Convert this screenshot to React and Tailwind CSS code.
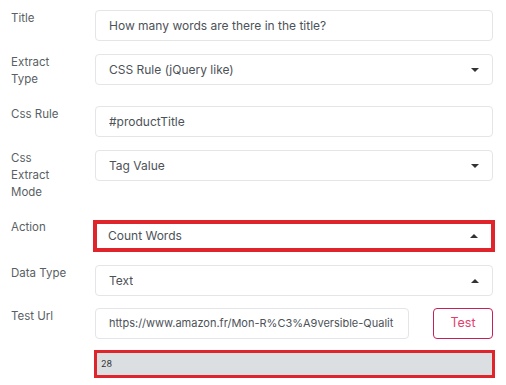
import React from "react";

const font = { fontFamily: "Inter, 'Noto Sans', sans-serif" };

function Caret({ up }) {
  return (
    <svg width="8" height="4" viewBox="0 0 8 4" className="shrink-0">
      {up ? <path d="M0 4 L4 0 L8 4 Z" fill="#333" /> : <path d="M0 0 L8 0 L4 4 Z" fill="#333" />}
    </svg>
  );
}

function Field({ children, select, up }) {
  return (
    <div className="flex h-[31px] flex-1 items-center justify-between rounded-[4px] border border-[#e3e5e8] bg-white pl-[13px] pr-[13px] text-[12px] text-[#4d5258]">
      <span className="truncate whitespace-nowrap">{children}</span>
      {select && <Caret up={up} />}
    </div>
  );
}

function Row({ label, children }) {
  return (
    <div className="flex items-start">
      <div className="w-[84px] shrink-0 pb-[5px] text-[11.5px] leading-[17px] text-[#5a5f65]">{label}</div>
      <div className="flex flex-1">{children}</div>
    </div>
  );
}

export default function App() {
  return (
    <div style={font} className="h-[385px] w-[506px] bg-white pl-[11px] pr-[13px] pt-[10px]">
      <div className="flex flex-col gap-[13px]">
        <Row label="Title">
          <Field>How many words are there in the title?</Field>
        </Row>
        <Row label={<>Extract<br />Type</>}>
          <Field select>CSS Rule (jQuery like)</Field>
        </Row>
        <Row label="Css Rule">
          <Field>#productTitle</Field>
        </Row>
        <Row label={<>Css<br />Extract<br />Mode</>}>
          <Field select>Tag Value</Field>
        </Row>
        <Row label="Action">
          <div className="-mx-[2px] mt-[1px] flex h-[32px] flex-1 items-center justify-between border-[4px] border-[#e0242c] bg-white pl-[11px] pr-[13px] text-[12px] text-[#4d5258]">
            <span>Count Words</span>
            <Caret up />
          </div>
        </Row>
        <Row label="Data Type">
          <Field select up>Text</Field>
        </Row>
        <div className="-mt-[1px]">
          <Row label="Test Url">
            <div className="flex flex-1 items-center gap-[24px]">
              <div className="flex h-[31px] w-[314px] items-center overflow-hidden rounded-[4px] border border-[#e3e5e8] bg-white pl-[13px] text-[11px] text-[#4d5258]">
                <span className="whitespace-nowrap">https://www.amazon.fr/Mon-R%C3%A9versible-Qualit</span>
              </div>
              <div className="flex h-[31px] w-[60px] items-center justify-center rounded-[4px] border border-[#c4215a] text-[12.5px] text-[#e2406b]">
                Test
              </div>
            </div>
          </Row>
        </div>
        <div className="-mt-[2px] flex">
          <div className="w-[84px] shrink-0" />
          <div className="-ml-[1px] -mr-[2px] flex h-[28px] flex-1 items-center border-[3px] border-[#e0242c] bg-[#dcdfe2] pl-[4px] text-[9px] text-[#333]">
            28
          </div>
        </div>
      </div>
    </div>
  );
}
